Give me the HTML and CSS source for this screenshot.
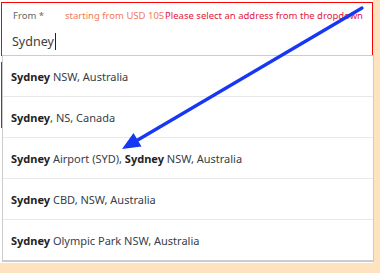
FILE: index.html
```html
<!DOCTYPE html>
<html lang="en">
<head>
    <meta charset="UTF-8">
    <meta name="viewport" content="width=device-width, initial-scale=1.0">
    <title>Transfer Search</title>
    <link rel="stylesheet" href="styles.css">
</head>
<body>

<div class="search-form">
    <div class="field field-error">
        <div class="field-top">
            <label class="field-label">From *</label>
            <span class="price-hint">starting from USD 105</span>
            <span class="error-msg">Please select an address from the dropdown</span>
        </div>
        <div class="field-input">Sydney<span class="caret"></span></div>
    </div>

    <div class="field field-error field-next"></div>

    <!-- Autocomplete results -->
    <ul class="suggestions">
        <li><b>Sydney</b> NSW, Australia</li>
        <li><b>Sydney</b>, NS, Canada</li>
        <li><b>Sydney</b> Airport (SYD), <b>Sydney</b> NSW, Australia</li>
        <li><b>Sydney</b> CBD, NSW, Australia</li>
        <li><b>Sydney</b> Olympic Park NSW, Australia</li>
    </ul>

    <!-- Annotation arrow -->
    <svg class="annotation" width="380" height="273" viewBox="0 0 380 273">
        <line x1="362" y1="8" x2="136" y2="141" stroke="#1638f5" stroke-width="3.2" stroke-linecap="round"/>
        <polygon points="122,149 133.5,133 141.5,146.5" fill="#1638f5"/>
    </svg>
</div>

</body>
</html>
```

FILE: styles.css
```css
body {
    margin: 0;
    background-color: #ffe3bf;
    font-family: "Noto Sans", "Open Sans", Arial, sans-serif;
}

.search-form {
    position: relative;
    width: 373px;
    height: 263px;
    padding-top: 2px;
    box-sizing: border-box;
    background-color: #ffffff;
}

.field {
    margin-left: 1px;
    width: 372px;
    box-sizing: border-box;
    border: 1px solid #ff0000;
}

.field-error {
    border-color: #ff0000;
}

.field:first-child {
    height: 54px;
}

.field-next {
    margin-top: 6px;
    height: 66px;
}

.field-top {
    position: relative;
    display: flex;
    align-items: center;
    height: 25px;
    padding-left: 11px;
    font-size: 9.5px;
}

.field-label {
    color: #666666;
    width: 52px;
}

.price-hint {
    color: #f07a5a;
}

.error-msg {
    position: absolute;
    right: 9px;
    top: 6px;
    color: #e0183c;
}

.field-input {
    display: flex;
    align-items: center;
    padding-left: 10px;
    height: 26px;
    font-size: 12.5px;
    color: #3d3d3d;
}

.caret {
    display: inline-block;
    width: 1px;
    height: 17px;
    margin-left: 1px;
    background-color: #222222;
}

.suggestions {
    position: absolute;
    left: 2px;
    top: 55px;
    width: 370px;
    margin: 0;
    padding: 0;
    list-style: none;
    background-color: #ffffff;
    border: 1px solid #cccccc;
    border-bottom-width: 2px;
}

.suggestions li {
    height: 40px;
    line-height: 41px;
    padding-left: 8px;
    font-size: 11px;
    color: #36404a;
    border-bottom: 1px solid #e8e8e8;
}

.suggestions li:last-child {
    border-bottom: none;
}

.suggestions b {
    color: #222222;
}

.annotation {
    position: absolute;
    left: 0;
    top: 0;
    pointer-events: none;
}
```
